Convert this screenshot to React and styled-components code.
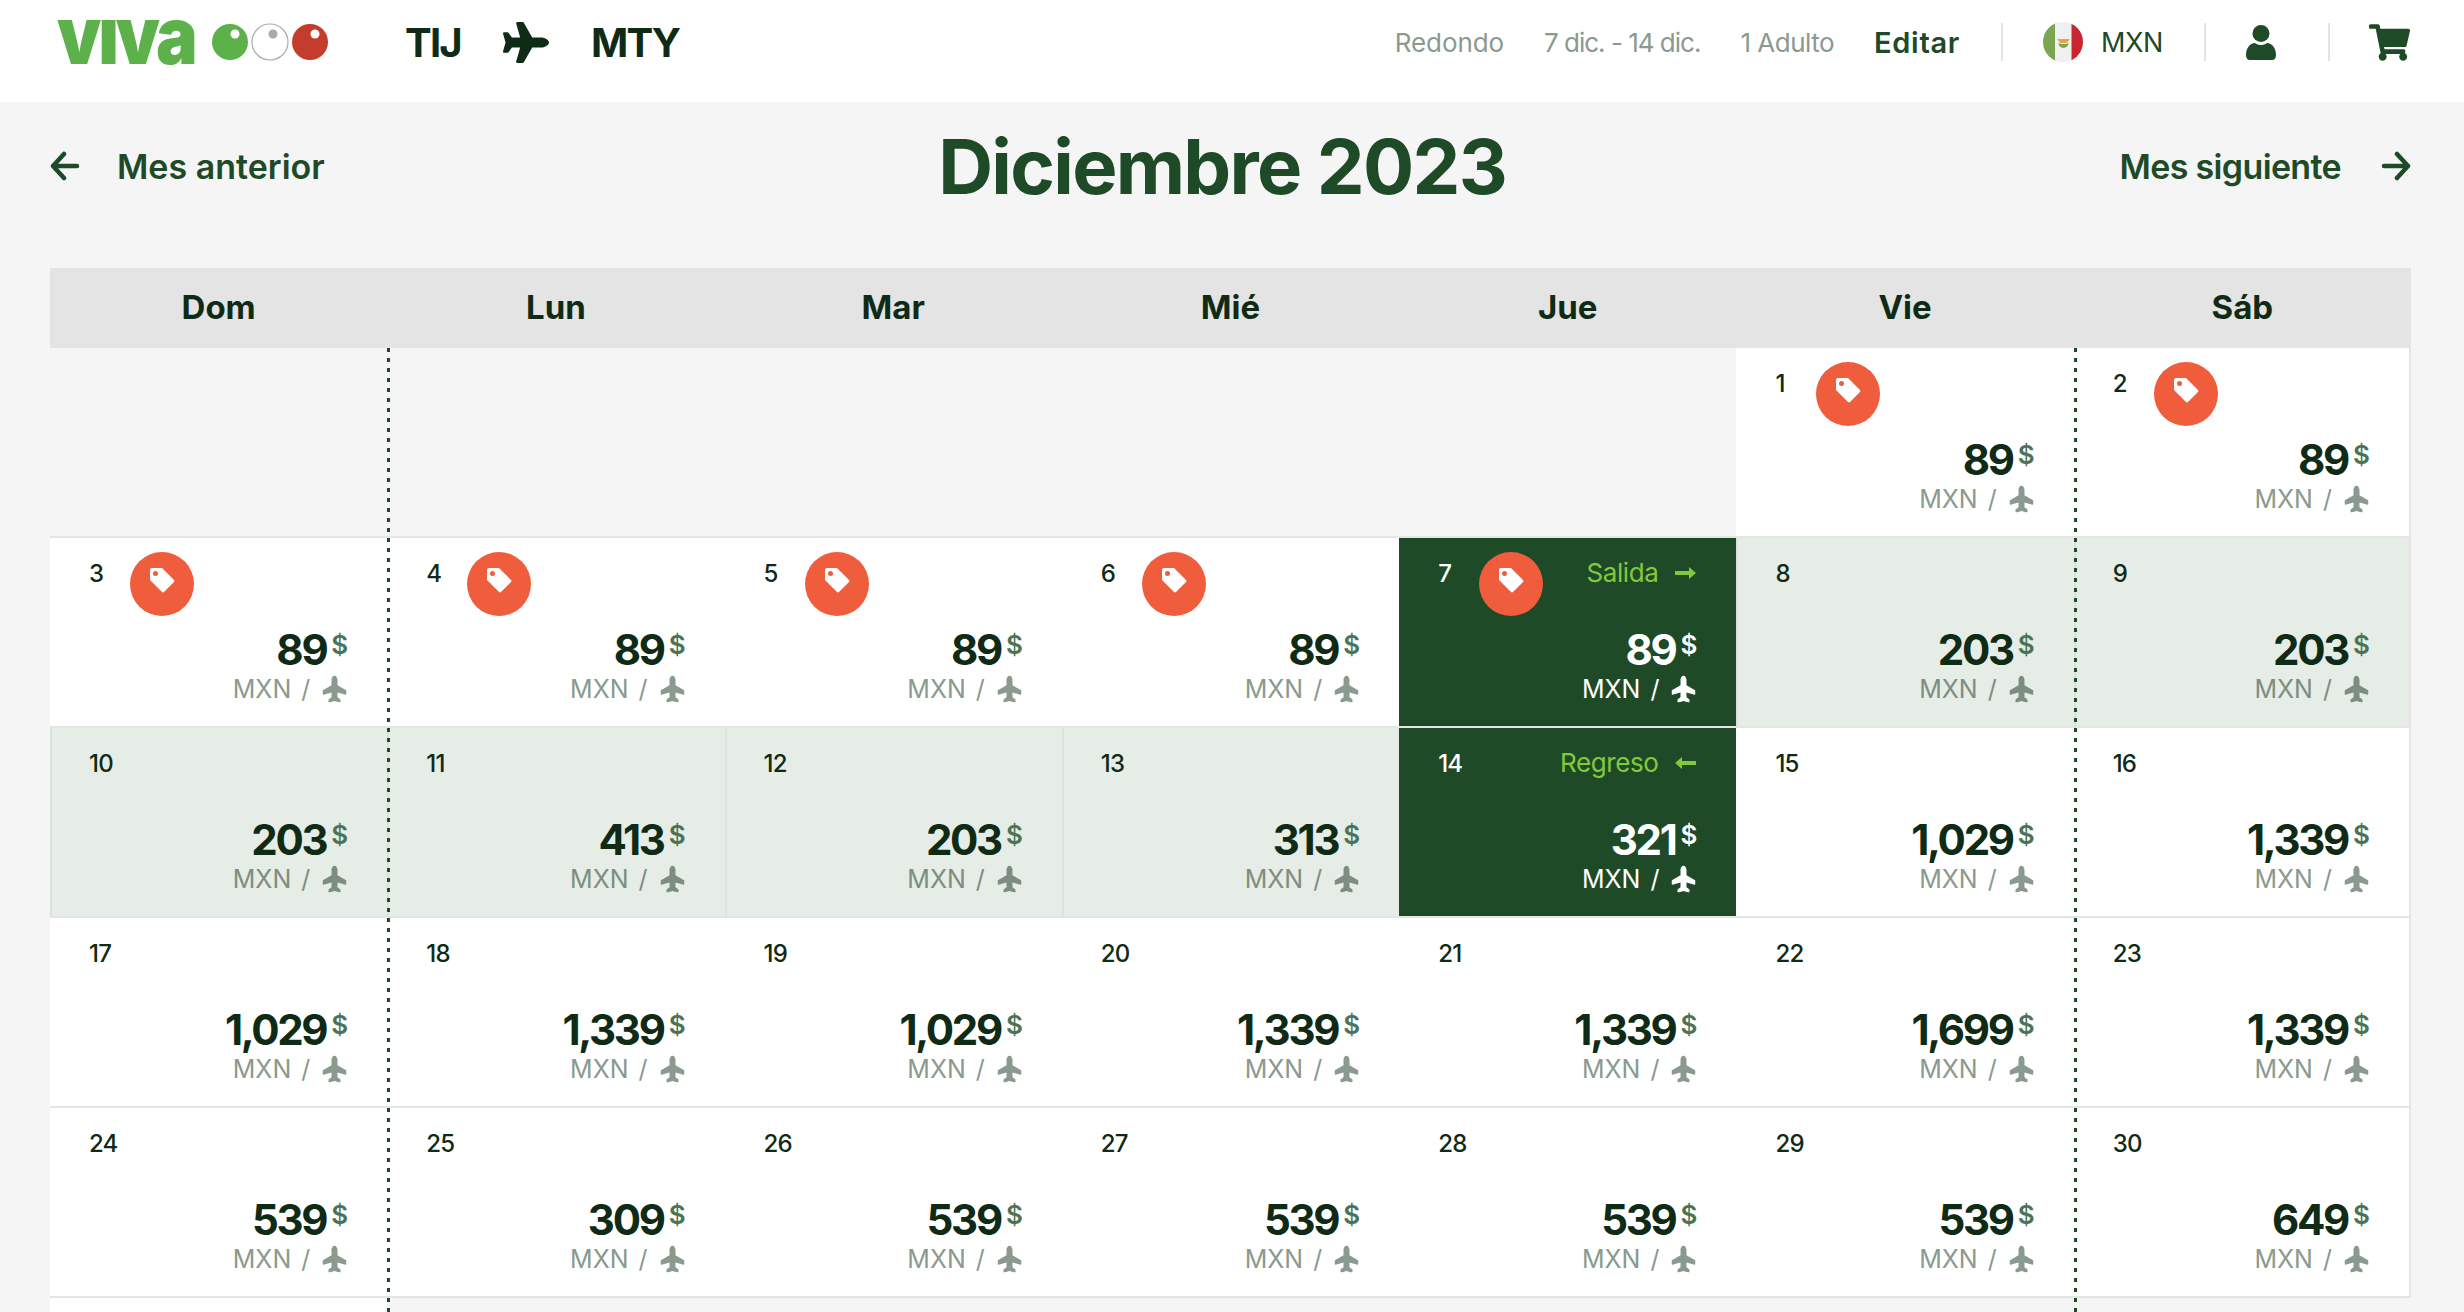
import React from 'react';
import styled, { createGlobalStyle } from 'styled-components';
import { FaPlane, FaShoppingCart } from 'react-icons/fa';

const GlobalStyle = createGlobalStyle`
  html, body {
    margin: 0;
    height: 1312px;
    overflow: hidden;
    background: #f5f5f5;
    font-family: "Inter", "Noto Sans", sans-serif;
    color: #0f2b16;
  }
  * { box-sizing: border-box; }
`;

const TopBar = styled.header`
  height: 102px;
  background: #fff;
  display: flex;
  align-items: center;
  justify-content: space-between;
  padding: 0 54px 18px 57px;
`;

const TopLeft = styled.div`
  display: flex;
  align-items: center;
`;

const Logo = styled.div`
  display: flex;
  align-items: center;
  width: 348px;
`;

const LogoWord = styled.span`
  flex: none;
  font-size: 80px;
  font-weight: 900;
  line-height: 60px;
  letter-spacing: -3.5px;
  color: #5cb14a;
  margin-right: -7px;
  padding-bottom: 14px;
  transform: scaleX(0.875);
  transform-origin: left center;
`;

const Route = styled.span`
  font-size: 40px;
  font-weight: 700;
  letter-spacing: -1.8px;
  color: #0f2b16;
`;

const RoutePlane = styled(FaPlane)`
  width: 46px;
  height: 41px;
  margin: 0 42px 0 42px;
  color: #0f2b16;
`;

const TopRight = styled.div`
  display: flex;
  align-items: center;
`;

const TripInfo = styled.span`
  font-size: 26px;
  letter-spacing: ${(p) => p.$spacing}px;
  color: #8a9a8e;
  margin-right: 40px;
`;

const EditLink = styled.span`
  font-size: 29px;
  font-weight: 600;
  letter-spacing: 0.7px;
  color: #1e4a28;
`;

const Divider = styled.span`
  width: 2px;
  height: 38px;
  background: #e3e3e3;
  margin: ${(p) => p.$margin};
`;

const Currency = styled.span`
  font-size: 27px;
  color: #1e4a28;
  margin-left: 18px;
  letter-spacing: -0.4px;
`;

const CartIcon = styled(FaShoppingCart)`
  width: 41px;
  height: 37px;
  color: #1e4a28;
`;

const Main = styled.main`
  padding: 0 53px 0 50px;
`;

const MonthNav = styled.div`
  height: 128px;
  margin-bottom: 38px;
  display: flex;
  align-items: center;
  justify-content: space-between;
`;

const MonthLink = styled.a`
  display: flex;
  align-items: center;
  gap: ${(p) => p.$gap}px;
  font-size: 34px;
  font-weight: 600;
  letter-spacing: ${(p) => p.$spacing}px;
  color: #1e4a28;
`;

const MonthTitle = styled.h1`
  margin: 0;
  font-size: 76px;
  font-weight: 700;
  letter-spacing: -1.7px;
  color: #1e4a28;
`;

const WeekHeader = styled.div`
  display: grid;
  grid-template-columns: repeat(7, 1fr);
  height: 80px;
  background: #e4e4e4;
`;

const WeekDay = styled.div`
  display: flex;
  align-items: center;
  justify-content: center;
  padding-bottom: 2px;
  font-size: 33px;
  font-weight: 700;
  color: #0f2b16;
`;

const CalendarWrap = styled.div`
  position: relative;
  height: 964px;
  overflow: hidden;
`;

const Grid = styled.div`
  display: grid;
  grid-template-columns: repeat(7, 1fr);
  grid-auto-rows: 190px;
`;

const DottedLine = styled.span`
  position: absolute;
  top: 0;
  bottom: 0;
  left: calc(100% / 7 * ${(p) => p.$col});
  width: 3px;
  background: repeating-linear-gradient(to bottom, #1e4a28 0, #1e4a28 4px, transparent 4px, transparent 10px);
`;

const cellColors = {
  blank: '#f5f5f5',
  white: '#fff',
  range: '#e6ede6',
  dark: '#1e4a28',
};

const Cell = styled.div`
  display: flex;
  flex-direction: column;
  padding: 14px 40px 0 39px;
  background: ${(p) => cellColors[p.$tone]};
  border-bottom: 2px solid #e5e5e5;
  border-left: ${(p) => (p.$tone === 'range' ? '2px solid #dce3dc' : 'none')};
  color: ${(p) => (p.$tone === 'dark' ? '#fff' : '#0f2b16')};
  &:nth-child(7n) {
    border-right: 2px solid #e5e5e5;
  }
  ${(p) => p.$tone === 'range' && 'padding-left: 37px;'}
`;

const CellTop = styled.div`
  display: flex;
  align-items: flex-start;
  height: 64px;
`;

const DayNumber = styled.span`
  width: 41px;
  flex: none;
  font-size: 24px;
  font-weight: 500;
  line-height: 43px;
  letter-spacing: -0.8px;
  white-space: nowrap;
`;

const TagBadge = styled.span`
  width: 64px;
  height: 64px;
  flex: none;
  border-radius: 50%;
  background: #ef5d3c;
  display: flex;
  align-items: center;
  justify-content: center;
`;

const TagIcon = styled.svg`
  width: 26px;
  height: 26px;
  margin-bottom: 8px;
`;

const TripLabel = styled.span`
  margin-left: auto;
  display: flex;
  align-items: center;
  gap: 17px;
  font-size: 26px;
  line-height: 42px;
  letter-spacing: -0.4px;
  color: #84c93a;
`;

const PriceRow = styled.div`
  display: flex;
  justify-content: flex-end;
  align-items: flex-start;
  gap: 5px;
  margin-top: 9px;
  height: 50px;
`;

const Amount = styled.span`
  font-size: 42px;
  font-weight: 700;
  line-height: 50px;
  letter-spacing: -2.3px;
`;

const Dollar = styled.span`
  font-size: 26px;
  font-weight: 600;
  line-height: 40px;
  margin-right: -1px;
  color: ${(p) => (p.$tone === 'dark' ? '#fff' : '#4b7355')};
`;

const FareRow = styled.div`
  display: flex;
  justify-content: flex-end;
  align-items: center;
  gap: 11px;
  height: 30px;
  margin-top: -1px;
  font-size: 25px;
  word-spacing: 3px;
  color: ${(p) => (p.$tone === 'dark' ? '#fff' : p.$tone === 'range' ? '#7d8e80' : '#8a9a8e')};
`;

const PlaneUp = styled(FaPlane)`
  width: 27px;
  height: 24px;
  transform: rotate(-90deg);
  margin-right: -1px;
`;

const prices = {
  1: 89, 2: 89, 3: 89, 4: 89, 5: 89, 6: 89, 7: 89, 8: 203, 9: 203, 10: 203,
  11: 413, 12: 203, 13: 313, 14: 321, 15: '1,029', 16: '1,339', 17: '1,029', 18: '1,339',
  19: '1,029', 20: '1,339', 21: '1,339', 22: '1,699', 23: '1,339', 24: 539, 25: 309,
  26: 539, 27: 539, 28: 539, 29: 539, 30: 649,
};

const toneOf = (day) => {
  if (day === 7 || day === 14) return 'dark';
  if (day > 7 && day < 14) return 'range';
  return 'white';
};

const Arrow = ({ left, size = 30 }) => (
  <svg width={size} height={size} viewBox="0 0 30 30" fill="none" stroke="currentColor" strokeWidth="4.5" strokeLinecap="round" strokeLinejoin="round">
    {left ? <path d="M27 15H4M14 3 3 15l11 12" /> : <path d="M3 15h23M16 3l11 12-11 12" />}
  </svg>
);

const SmallArrow = ({ left }) => (
  <svg width="21" height="14" viewBox="0 0 21 14" fill="currentColor">
    {left ? <path d="M0 7 7 1v4h14v4H7v4z" /> : <path d="M21 7 14 1v4H0v4h14v4z" />}
  </svg>
);

const Tag = () => (
  <TagIcon viewBox="0 0 26 26">
    <path d="M1 3a2 2 0 0 1 2-2h10l12 12a1.5 1.5 0 0 1 0 2L15 25a1.5 1.5 0 0 1-2 0L1 13z" fill="#fff" />
    <circle cx="6.5" cy="6.5" r="2.5" fill="#ef5d3c" />
  </TagIcon>
);

const Balls = () => (
  <svg width="144" height="40" viewBox="0 0 144 40" style={{ marginLeft: 3 }}>
    <circle cx="20" cy="20" r="18" fill="#5cb14a" />
    <circle cx="25" cy="12" r="4.5" fill="#fff" />
    <circle cx="60" cy="20" r="18" fill="#fff" stroke="#aaa" strokeWidth="1.2" />
    <circle cx="63" cy="12" r="4.5" fill="#aaa" />
    <circle cx="100" cy="20" r="18" fill="#c33c2c" />
    <circle cx="105" cy="12" r="4.5" fill="#fff" />
  </svg>
);

const Flag = () => (
  <svg width="40" height="40" viewBox="0 0 40 40">
    <defs>
      <clipPath id="flag-clip"><circle cx="20" cy="20" r="20" /></clipPath>
    </defs>
    <g clipPath="url(#flag-clip)">
      <rect width="14" height="40" fill="#7ba650" />
      <rect x="12" width="17" height="40" fill="#f0f0f0" />
      <rect x="28.5" width="12" height="40" fill="#c8262f" />
      <path d="M14 17h13l-3.5 4h-6z" fill="#f0a040" />
      <path d="M15.5 21a5 5 0 0 0 10 0l-3 1h-4z" fill="#7ba650" />
    </g>
  </svg>
);

const UserIcon = () => (
  <svg width="30" height="35" viewBox="0 0 30 35" fill="#1e4a28">
    <circle cx="15" cy="8.5" r="8.5" />
    <path d="M0 30c0-7 4-12 9-12 2 1.500 4 2 6 2s4-.5 6-2c5 0 9 5 9 12 0 3-1.500 5-4 5H4c-2.500 0-4-2-4-5z" />
  </svg>
);

const DayCell = ({ day }) => {
  const tone = toneOf(day);
  return (
    <Cell $tone={tone}>
      <CellTop>
        <DayNumber>{day}</DayNumber>
        {day <= 7 && (
          <TagBadge>
            <Tag />
          </TagBadge>
        )}
        {day === 7 && (
          <TripLabel>
            Salida <SmallArrow />
          </TripLabel>
        )}
        {day === 14 && (
          <TripLabel>
            Regreso <SmallArrow left />
          </TripLabel>
        )}
      </CellTop>
      <PriceRow>
        <Amount>{prices[day]}</Amount>
        <Dollar $tone={tone}>$</Dollar>
      </PriceRow>
      <FareRow $tone={tone}>
        <span>MXN /</span>
        <PlaneUp />
      </FareRow>
    </Cell>
  );
};

const weekDays = ['Dom', 'Lun', 'Mar', 'Mié', 'Jue', 'Vie', 'Sáb'];

const App = () => {
  const days = Array.from({ length: 30 }, (_, i) => i + 1);
  return (
    <>
      <GlobalStyle />
      <TopBar>
        <TopLeft>
          <Logo>
            <LogoWord>vıva</LogoWord>
            <Balls />
          </Logo>
          <Route>TIJ</Route>
          <RoutePlane />
          <Route>MTY</Route>
        </TopLeft>
        <TopRight>
          <TripInfo $spacing={-0.1}>Redondo</TripInfo>
          <TripInfo $spacing={-1}>7 dic. - 14 dic.</TripInfo>
          <TripInfo $spacing={-0.5}>1 Adulto</TripInfo>
          <EditLink>Editar</EditLink>
          <Divider $margin="0 40px 0 41px" />
          <Flag />
          <Currency>MXN</Currency>
          <Divider $margin="0 40px 0 41px" />
          <UserIcon />
          <Divider $margin="0 39px 0 52px" />
          <CartIcon />
        </TopRight>
      </TopBar>
      <Main>
        <MonthNav>
          <MonthLink $gap={37} $spacing={0}>
            <Arrow left />
            Mes anterior
          </MonthLink>
          <MonthTitle>Diciembre 2023</MonthTitle>
          <MonthLink $gap={40} $spacing={-0.65}>
            Mes siguiente
            <Arrow />
          </MonthLink>
        </MonthNav>
        <WeekHeader>
          {weekDays.map((d) => (
            <WeekDay key={d}>{d}</WeekDay>
          ))}
        </WeekHeader>
        <CalendarWrap>
          <Grid>
            {[0, 1, 2, 3, 4].map((i) => (
              <Cell key={i} $tone="blank" />
            ))}
            {days.map((day) => (
              <DayCell key={day} day={day} />
            ))}
            <Cell $tone="white" />
          </Grid>
          <DottedLine $col={1} />
          <DottedLine $col={6} />
        </CalendarWrap>
      </Main>
    </>
  );
};

export default App;
